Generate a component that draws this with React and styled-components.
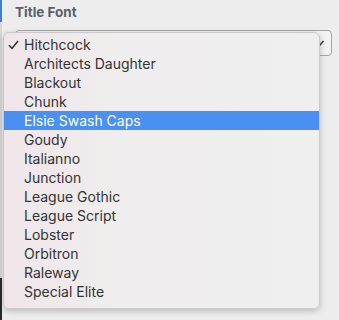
import React from 'react';
import styled, { createGlobalStyle } from 'styled-components';

const GlobalStyle = createGlobalStyle`
  html, body {
    margin: 0;
    padding: 0;
    background: #ececec;
    font-family: Inter, "Liberation Sans", Arial, sans-serif;
  }
`;

const Frame = styled.div`
  position: relative;
  display: flex;
  width: 339px;
  height: 320px;
  overflow: hidden;
  background: #ededed;
`;

const Edge = styled.div`
  display: flex;
  flex-direction: column;
  width: 2px;
  flex-shrink: 0;
  .top {
    height: 22px;
    background: #3f7fd8;
  }
  .mid {
    flex: 1;
    background: #d8d8d8;
  }
  .bottom {
    height: 42px;
    background: #2a2a2a;
  }
`;

const Panel = styled.div`
  flex: 1;
  padding: 4px 7px 0 13px;
`;

const Label = styled.div`
  font-size: 13.5px;
  font-weight: 700;
  color: #5b6068;
  line-height: 16px;
  margin-bottom: 10px;
`;

const SelectBox = styled.div`
  height: 26px;
  border: 1px solid #a6a6a6;
  border-radius: 4px;
  background: #f2f2f2;
  display: flex;
  align-items: center;
  justify-content: flex-end;
  padding-right: 7px;
  box-sizing: border-box;
  svg {
    display: block;
  }
`;

const Menu = styled.ul`
  position: absolute;
  left: 3px;
  top: 32px;
  width: 317px;
  margin: 0;
  padding: 2px 0 7px;
  list-style: none;
  box-sizing: border-box;
  border-radius: 6px;
  border: 1px solid #c9c9c9;
  background: linear-gradient(90deg, #f0e6e9 0%, #efeded 35%, #efefef 100%);
  box-shadow: 0 2px 6px rgba(0, 0, 0, 0.22);
`;

const Item = styled.li`
  display: flex;
  align-items: center;
  height: 19px;
  padding-left: 20px;
  position: relative;
  font-size: 14px;
  color: ${(p) => (p.$active ? '#ffffff' : '#333333')};
  background: ${(p) => (p.$active ? '#4a90f2' : 'transparent')};
  .check {
    position: absolute;
    left: 4px;
    top: 5px;
  }
`;

const fonts = [
  'Hitchcock',
  'Architects Daughter',
  'Blackout',
  'Chunk',
  'Elsie Swash Caps',
  'Goudy',
  'Italianno',
  'Junction',
  'League Gothic',
  'League Script',
  'Lobster',
  'Orbitron',
  'Raleway',
  'Special Elite',
];

const App = () => {
  const selected = 'Hitchcock';
  const hovered = 'Elsie Swash Caps';

  return (
    <Frame>
      <GlobalStyle />
      <Edge>
        <div className="top" />
        <div className="mid" />
        <div className="bottom" />
      </Edge>
      <Panel>
        <Label>Title Font</Label>
        <SelectBox>
          <svg width="5" height="6" viewBox="0 0 5 6">
            <path d="M0.5 5.5 L4.5 1" stroke="#333" strokeWidth="1.3" fill="none" />
          </svg>
        </SelectBox>
      </Panel>
      <Menu>
        {fonts.map((f) => (
          <Item key={f} $active={f === hovered}>
            {f === selected && (
              <svg className="check" width="11" height="10" viewBox="0 0 11 10">
                <path d="M1 5.2 L4 8.4 L10 1" stroke="#2b2b2b" strokeWidth="1.5" fill="none" />
              </svg>
            )}
            {f}
          </Item>
        ))}
      </Menu>
    </Frame>
  );
};

export default App;
